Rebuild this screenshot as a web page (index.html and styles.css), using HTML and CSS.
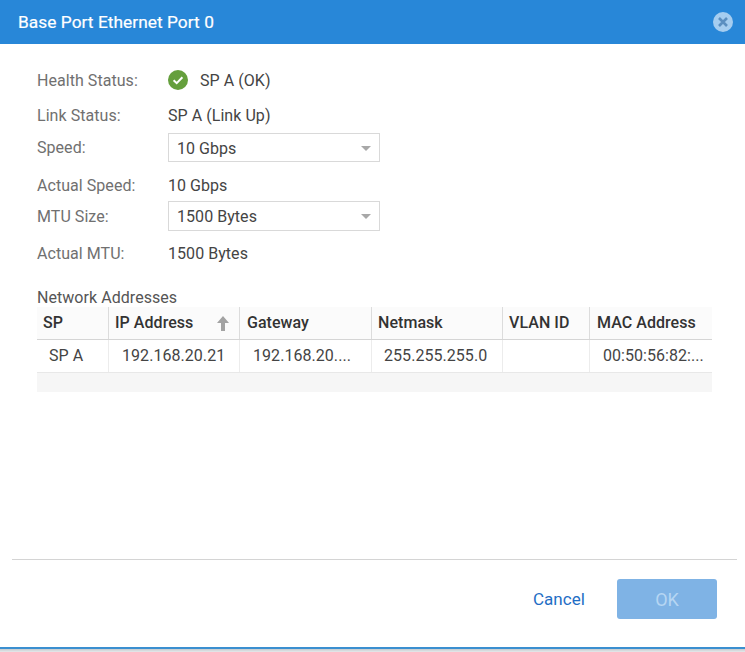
FILE: index.html
```html
<!DOCTYPE html>
<html lang="en">
<head>
  <meta charset="UTF-8" />
  <title>Base Port Ethernet Port 0</title>
  <link rel="stylesheet" href="styles.css">
</head>
<body>

  <div class="dialog">
    <header class="dialog-header">
      <h1>Base Port Ethernet Port 0</h1>
      <svg class="close-icon" width="20" height="20" viewBox="0 0 20 20">
        <circle cx="10" cy="10" r="10" fill="#a5cdf0"/>
        <path d="M6 6l8 8M14 6l-8 8" stroke="#5b8fc0" stroke-width="2.6" fill="none"/>
      </svg>
    </header>

    <div class="dialog-body">
      <div class="field row-health">
        <span class="field-label">Health Status:</span>
        <span class="field-value">
          <svg class="ok-icon" width="20" height="20" viewBox="0 0 20 20">
            <circle cx="10" cy="10" r="10" fill="#659f3d"/>
            <path d="M5.6 10.2l3.1 3 5.7-6" stroke="#fff" stroke-width="2" fill="none"/>
          </svg>
          SP A (OK)
        </span>
      </div>
      <div class="field row-link">
        <span class="field-label">Link Status:</span>
        <span class="field-value">SP A (Link Up)</span>
      </div>
      <div class="field row-speed">
        <span class="field-label">Speed:</span>
        <div class="select select-speed">10 Gbps<span class="caret"></span></div>
      </div>
      <div class="field row-actual-speed">
        <span class="field-label">Actual Speed:</span>
        <span class="field-value">10 Gbps</span>
      </div>
      <div class="field row-mtu">
        <span class="field-label">MTU Size:</span>
        <div class="select select-mtu">1500 Bytes<span class="caret"></span></div>
      </div>
      <div class="field row-actual-mtu">
        <span class="field-label">Actual MTU:</span>
        <span class="field-value">1500 Bytes</span>
      </div>

      <div class="section-title">Network Addresses</div>
      <div class="grid">
        <div class="grid-row grid-head">
          <div class="cell">SP</div>
          <div class="cell cell-sorted">IP Address
            <svg class="sort-icon" width="12" height="15" viewBox="0 0 12 15">
              <path d="M6 0l6 7H8v8H4V7H0z" fill="#a3a3a3"/>
            </svg>
          </div>
          <div class="cell cell-wide">Gateway</div>
          <div class="cell">Netmask</div>
          <div class="cell">VLAN ID</div>
          <div class="cell">MAC Address</div>
        </div>
        <div class="grid-row grid-data">
          <div class="cell">SP A</div>
          <div class="cell cell-wide">192.168.20.21</div>
          <div class="cell cell-wide">192.168.20....</div>
          <div class="cell">255.255.255.0</div>
          <div class="cell"></div>
          <div class="cell">00:50:56:82:...</div>
        </div>
        <div class="grid-footer"></div>
      </div>
    </div>

    <footer class="dialog-footer">
      <a class="cancel-link">Cancel</a>
      <button class="ok-button" type="button">OK</button>
    </footer>
  </div>

</body>
</html>
```

FILE: styles.css
```css
body {
  margin: 0;
  height: 652px;
  overflow: hidden;
  background: linear-gradient(#c4cbcf 649px, #e6e9eb 652px);
  font-family: Roboto, "Liberation Sans", sans-serif;
  font-size: 16px;
  letter-spacing: 0.05px;
  color: #444;
}

.dialog {
  height: 649px;
  box-sizing: border-box;
  background: #fff;
  border-bottom: 2px solid #3a8fd0;
  display: flex;
  flex-direction: column;
}

.dialog-header {
  height: 44px;
  flex: none;
  background: #2887d8;
  padding: 0 12px 0 18px;
  display: flex;
  align-items: center;
  justify-content: space-between;
}

.dialog-header h1 {
  margin: 0 0 1px;
  font-size: 17.3px;
  font-weight: 400;
  color: #fff;
  -webkit-text-stroke: 0.2px #fff;
}

.dialog-body {
  flex: 1;
  padding: 0 33px 0 37px;
}

.field {
  display: flex;
  align-items: center;
}

.field-label {
  width: 131px;
  flex: none;
  color: #707070;
}

.field-value {
  display: flex;
  align-items: center;
}

.ok-icon {
  margin-right: 12px;
}

.row-health { margin-top: 26px; height: 20px; }
.row-link { margin-top: 15px; height: 20px; }
.row-speed { margin-top: 8px; }
.row-actual-speed { margin-top: 13px; height: 20px; }
.row-mtu { margin-top: 6px; }
.row-actual-mtu { margin-top: 12px; height: 20px; }

.select {
  width: 212px;
  box-sizing: border-box;
  border: 1px solid #d9d9d9;
  padding: 1px 0 0 8px;
  display: flex;
  align-items: center;
  justify-content: space-between;
}

.select-speed { height: 29px; }
.select-mtu { height: 30px; }

.caret {
  width: 0;
  height: 0;
  margin-right: 8px;
  border-left: 5px solid transparent;
  border-right: 5px solid transparent;
  border-top: 5px solid #a8a8a8;
}

.section-title {
  margin-top: 26px;
  height: 18px;
  line-height: 18px;
  color: #555;
}

.grid {
  width: 675px;
}

.grid-row {
  display: grid;
  grid-template-columns: 72px 131px 132px 131px 87px 122px;
}

.grid-head {
  height: 33px;
  box-sizing: border-box;
  background: #fbfbfb;
  border-bottom: 1px solid #d5d5d5;
  font-weight: 500;
  color: #333;
}

.grid-head .cell {
  padding-left: 6px;
  border-right: 1px solid #dcdcdc;
  line-height: 32px;
}

.grid-head .cell-wide {
  padding-left: 7px;
}

.grid-head .cell:last-child,
.grid-data .cell:last-child {
  border-right: 0;
  padding-left: 7px;
}

.cell-sorted {
  display: flex;
  align-items: center;
  justify-content: space-between;
  padding-right: 10px;
}

.sort-icon {
  margin-top: 1px;
}

.grid-data {
  height: 33px;
  box-sizing: border-box;
  border-bottom: 1px solid #e8e8e8;
}

.grid-data .cell {
  padding-left: 12px;
  border-right: 1px solid #ececec;
  line-height: 32px;
  white-space: nowrap;
}

.grid-data .cell-wide {
  padding-left: 13px;
}

.grid-data .cell:last-child {
  padding-left: 13px;
}

.grid-footer {
  height: 19px;
  background: #f6f6f6;
}

.dialog-footer {
  flex: none;
  height: 88px;
  box-sizing: border-box;
  margin: 0 8px 0 12px;
  border-top: 1px solid #d4d4d4;
  padding: 19px 20px 0 0;
  display: flex;
  justify-content: flex-end;
  align-items: flex-start;
  gap: 32px;
}

.cancel-link {
  line-height: 40px;
  font-size: 17px;
  color: #1f6ec5;
}

.ok-button {
  width: 100px;
  height: 40px;
  border: 0;
  border-radius: 3px;
  background: #7fb3e5;
  color: #b6d6f3;
  font-family: inherit;
  font-size: 18px;
  font-weight: 400;
}
```
